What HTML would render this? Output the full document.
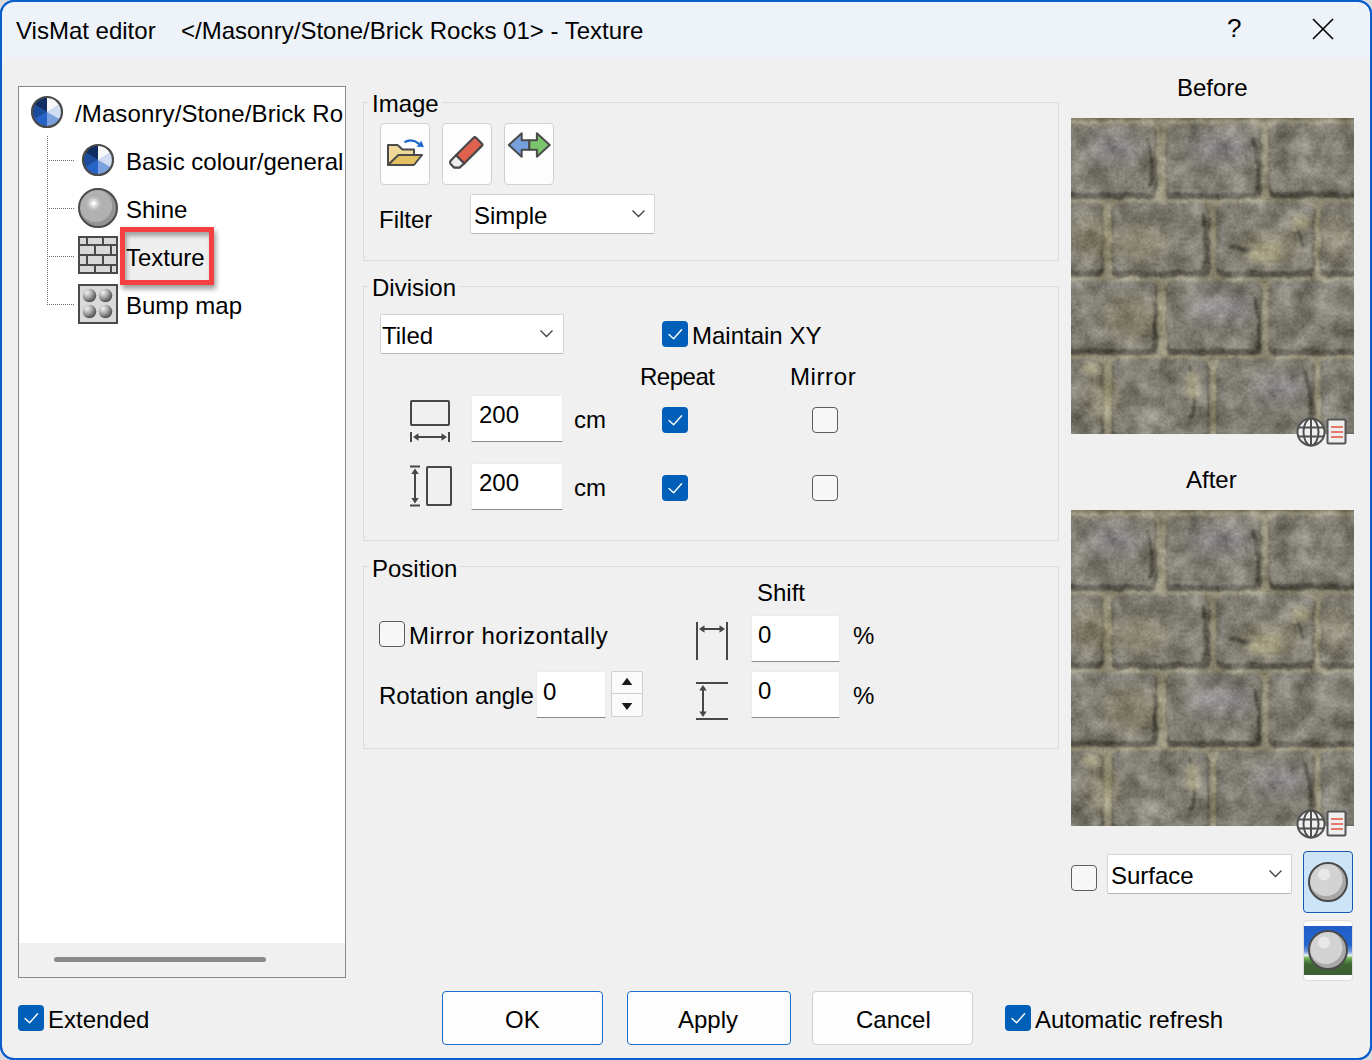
<!DOCTYPE html>
<html><head><meta charset="utf-8">
<style>
html,body{margin:0;padding:0;width:1372px;height:1060px;overflow:hidden;background:#dcdcdc;}
*{box-sizing:border-box;}
#win{position:absolute;left:0;top:0;width:1372px;height:1060px;background:#f0f0f0;border:2px solid #0b5fcd;border-radius:14px;overflow:hidden;}
.t{position:absolute;font-family:"Liberation Sans",sans-serif;font-size:24px;line-height:24px;color:#000;white-space:nowrap;}
.abs{position:absolute;}
#title{position:absolute;left:0;top:0;width:1368px;height:56px;background:#eef3fa;}
.grp{position:absolute;border:1px solid #dcdcdc;}
.lbl{background:#f0f0f0;padding:0 3px 0 3px;}
.combo{position:absolute;background:#fff;border:1px solid #d4d4d4;border-bottom-color:#b8b8b8;border-radius:2px;}
.edit{position:absolute;background:#fff;border:1px solid #ebebeb;border-bottom:1px solid #8a8a8a;border-radius:2px 2px 0 0;}
.cb{position:absolute;width:26px;height:26px;border-radius:4px;}
.cb.on{background:#005fb8;}
.cb.on::after{content:"";position:absolute;left:0;top:0;width:26px;height:26px;background:no-repeat;}
.cb.off{background:#f7f7f7;border:1.6px solid #5c5c5c;}
.btn{position:absolute;background:#fdfdfd;border:1px solid #d0d0d0;border-radius:4px;}
.btn.blue{border:1.5px solid #1a6fcc;}
</style></head>
<body>
<div id="win">
<div id="title"></div>
</div>
<!-- everything positioned in page coordinates -->
<div class="t" style="left:16px;top:19px;">VisMat editor</div>
<div class="t" style="left:181px;top:19px;">&lt;/Masonry/Stone/Brick Rocks 01&gt; - Texture</div>
<div class="t" style="left:1227px;top:16px;font-size:26px;">?</div>
<svg class="abs" style="left:1312px;top:18px" width="22" height="22" viewBox="0 0 22 22"><path d="M1 1L21 21M21 1L1 21" stroke="#000" stroke-width="1.6"/></svg>


<!-- TREE -->
<div class="abs" style="left:18px;top:86px;width:328px;height:892px;background:#fff;border:1px solid #828790;"></div>
<div class="abs" style="left:19px;top:943px;width:326px;height:34px;background:#f0f0f0;"></div>
<div class="abs" style="left:54px;top:957px;width:212px;height:5px;background:#8a8a8a;border-radius:3px;"></div>
<svg class="abs" style="left:19px;top:87px" width="326" height="260">
 <g stroke="#6e6e6e" stroke-width="1" stroke-dasharray="1 1" fill="none">
  <path d="M28.5 49V218"/>
  <path d="M28 73.5H55M28 121.5H55M28 169.5H55M28 217.5H55"/>
 </g>
</svg>
<!-- pie icons -->
<svg class="abs" style="left:30px;top:95px" width="34" height="34" viewBox="-17 -17 34 34">
 <circle r="15" fill="#5a7fc0"/>
 <g>
  <path d="M0 0L0 -15A15 15 0 0 0 -12.99 -7.5Z" fill="#0f2d63"/>
  <path d="M0 0L-12.99 -7.5A15 15 0 0 0 -12.99 7.5Z" fill="#1b4b9b"/>
  <path d="M0 0L-12.99 7.5A15 15 0 0 0 0 15Z" fill="#2563c6"/>
  <path d="M0 0L0 15A15 15 0 0 0 12.99 7.5Z" fill="#7aa1dd"/>
  <path d="M0 0L12.99 7.5A15 15 0 0 0 12.99 -7.5Z" fill="#cfdcf1"/>
  <path d="M0 0L12.99 -7.5A15 15 0 0 0 0 -15Z" fill="#f7f7f7"/>
 </g>
 <circle r="15" fill="none" stroke="#4a4a4a" stroke-width="2.2"/>
</svg>
<svg class="abs" style="left:81px;top:143px" width="34" height="34" viewBox="-17 -17 34 34">
 <circle r="15" fill="#5a7fc0"/>
 <g>
  <path d="M0 0L0 -15A15 15 0 0 0 -12.99 -7.5Z" fill="#0f2d63"/>
  <path d="M0 0L-12.99 -7.5A15 15 0 0 0 -12.99 7.5Z" fill="#1b4b9b"/>
  <path d="M0 0L-12.99 7.5A15 15 0 0 0 0 15Z" fill="#2563c6"/>
  <path d="M0 0L0 15A15 15 0 0 0 12.99 7.5Z" fill="#7aa1dd"/>
  <path d="M0 0L12.99 7.5A15 15 0 0 0 12.99 -7.5Z" fill="#cfdcf1"/>
  <path d="M0 0L12.99 -7.5A15 15 0 0 0 0 -15Z" fill="#f7f7f7"/>
 </g>
 <circle r="15" fill="none" stroke="#4a4a4a" stroke-width="2.2"/>
</svg>
<!-- shine sphere -->
<svg class="abs" style="left:77px;top:187px" width="42" height="42" viewBox="-21 -21 42 42">
 <defs><filter id="sb"><feGaussianBlur stdDeviation="0.6"/></filter></defs>
 <circle r="19" fill="#939393"/>
 <g filter="url(#sb)">
 <circle cx="-2.2" cy="-2.2" r="16.3" fill="#b1b1b1"/>
 <circle cx="-4.3" cy="-4.6" r="7" fill="#bdbdbd"/>
 <circle cx="-4.3" cy="-4.6" r="5" fill="#d2d2d2"/>
 <circle cx="-4.3" cy="-4.6" r="3.2" fill="#e6e6e6"/>
 <circle cx="-4.3" cy="-4.6" r="1.8" fill="#ffffff"/>
 </g>
 <circle r="19" fill="none" stroke="#4a4a4a" stroke-width="2"/>
</svg>
<!-- brick icon -->
<svg class="abs" style="left:77px;top:235px" width="42" height="40" viewBox="0 0 42 40">
 <rect x="2" y="2" width="38" height="36" fill="#d9d9d9" stroke="#4a4a4a" stroke-width="2"/>
 <path d="M2 10H40M2 20H40M2 30H40M10 2V10M26 2V10M18 10V20M34 10V20M10 20V30M26 20V30M18 30V38M34 30V38" stroke="#4a4a4a" stroke-width="2" fill="none"/>
</svg>
<!-- bump icon -->
<svg class="abs" style="left:77px;top:283px" width="42" height="42" viewBox="0 0 42 42">
 <defs>
  <radialGradient id="bg1" cx="0.32" cy="0.28" r="0.8">
   <stop offset="0" stop-color="#f2f2f2"/><stop offset="0.45" stop-color="#a8a8a8"/><stop offset="0.85" stop-color="#5a5a5a"/><stop offset="1" stop-color="#555"/>
  </radialGradient>
 </defs>
 <rect x="2" y="2" width="38" height="38" fill="#d9d9d9" stroke="#4a4a4a" stroke-width="2"/>
 <circle cx="12.5" cy="12.5" r="6.8" fill="url(#bg1)"/>
 <circle cx="28.5" cy="12.5" r="6.8" fill="url(#bg1)"/>
 <circle cx="12.5" cy="28.5" r="6.8" fill="url(#bg1)"/>
 <circle cx="28.5" cy="28.5" r="6.8" fill="url(#bg1)"/>
</svg>
<!-- selected item + annotation -->
<div class="abs" style="left:125px;top:232px;width:84px;height:48px;background:#efefef;box-shadow:inset 2px 4px 4px rgba(0,0,0,0.32);"></div>
<div class="abs" style="left:120px;top:227px;width:94px;height:58px;border:5px solid #f5403f;box-shadow:2px 4px 5px rgba(0,0,0,0.38);"></div>
<div class="abs" style="left:19px;top:87px;width:324px;height:856px;overflow:hidden;">
<div class="t" style="left:56px;top:15px;letter-spacing:0.12px;">/Masonry/Stone/Brick Ro</div>
<div class="t" style="left:107px;top:63px;">Basic colour/general</div>
<div class="t" style="left:107px;top:111px;">Shine</div>
<div class="t" style="left:107px;top:159px;">Texture</div>
<div class="t" style="left:107px;top:207px;">Bump map</div>
</div>


<!-- IMAGE GROUP -->
<div class="grp" style="left:363px;top:102px;width:696px;height:159px;"></div>
<div class="t lbl" style="left:369px;top:92px;">Image</div>
<div class="btn" style="left:380px;top:123px;width:50px;height:62px;"></div>
<div class="btn" style="left:442px;top:123px;width:50px;height:62px;"></div>
<div class="btn" style="left:504px;top:123px;width:50px;height:62px;"></div>
<svg class="abs" style="left:380px;top:123px" width="50" height="62" viewBox="0 0 50 62">
 <path d="M8 42V22H17.5L22.5 26.5H34V32" fill="#f0d898" stroke="#4a4a4a" stroke-width="2" stroke-linejoin="round"/>
 <path d="M8 42L18.4 32H42L34 42Z" fill="#e3c060" stroke="#4a4a4a" stroke-width="2" stroke-linejoin="round"/>
 <path d="M24.5 19.3Q32 15 39 20.8" fill="none" stroke="#1a66cc" stroke-width="2.2"/>
 <path d="M41.2 18.2L43.5 23.8L37.2 23.5Z" fill="#1a66cc" stroke="#1a66cc" stroke-width="0.6" stroke-linejoin="round"/>
</svg>
<svg class="abs" style="left:442px;top:123px" width="50" height="62" viewBox="0 0 50 62">
 <path d="M14 32.3L31.6 14.7Q32.8 13.5 34 14.7L39.8 20.5Q41 21.7 39.8 22.9L22.2 40.5Z" fill="#e06150" stroke="#474747" stroke-width="2.2" stroke-linejoin="round"/>
 <path d="M14 32.3L8.6 37.7Q7.4 39.4 8.6 41L12 44.6H17.6L22.2 40.5Z" fill="#eeeeee" stroke="#474747" stroke-width="2.2" stroke-linejoin="round"/>
</svg>
<svg class="abs" style="left:504px;top:123px" width="50" height="62" viewBox="0 0 50 62">
 <path d="M25.3 17.2H17.7V10.3L4.8 22L17.7 33.7V26.8H25.3Z" fill="#76a0dc" stroke="#4a4a4a" stroke-width="2" stroke-linejoin="round"/>
 <path d="M25.3 17.2H32.9V10.3L45.7 22L32.9 33.7V26.8H25.3Z" fill="#7cc46c" stroke="#4a4a4a" stroke-width="2" stroke-linejoin="round"/>
</svg>
<div class="t" style="left:379px;top:208px;">Filter</div>
<div class="combo" style="left:470px;top:194px;width:185px;height:40px;"></div>
<div class="t" style="left:474px;top:204px;">Simple</div>
<svg class="abs" style="left:631px;top:209px" width="15" height="10"><path d="M1.5 1.5L7.5 7.5L13.5 1.5" fill="none" stroke="#404040" stroke-width="1.3"/></svg>

<!-- DIVISION GROUP -->
<div class="grp" style="left:363px;top:286px;width:696px;height:255px;"></div>
<div class="t lbl" style="left:369px;top:276px;">Division</div>
<div class="combo" style="left:380px;top:314px;width:184px;height:40px;"></div>
<div class="t" style="left:382px;top:324px;">Tiled</div>
<svg class="abs" style="left:539px;top:329px" width="15" height="10"><path d="M1.5 1.5L7.5 7.5L13.5 1.5" fill="none" stroke="#404040" stroke-width="1.3"/></svg>
<div class="cb on" style="left:662px;top:321px;"></div>
<div class="t" style="left:692px;top:324px;">Maintain XY</div>
<div class="t" style="left:640px;top:365px;letter-spacing:-0.5px;">Repeat</div>
<div class="t" style="left:790px;top:365px;letter-spacing:0.6px;">Mirror</div>
<svg class="abs" style="left:408px;top:398px" width="46" height="46" viewBox="0 0 46 46">
 <rect x="3" y="3" width="38" height="24" rx="0.8" fill="none" stroke="#474747" stroke-width="2"/>
 <path d="M3 34V44M41 34V44M8 39H36" stroke="#474747" stroke-width="2" fill="none"/>
 <path d="M5 39L10.5 35.3V42.7Z M39 39L33.5 35.3V42.7Z" fill="#474747"/>
</svg>
<svg class="abs" style="left:408px;top:464px" width="46" height="44" viewBox="0 0 46 44">
 <rect x="19" y="3" width="24" height="38" rx="0.8" fill="none" stroke="#474747" stroke-width="2"/>
 <path d="M2 2.5H12M2 41.5H12M7 8V36" stroke="#474747" stroke-width="2" fill="none"/>
 <path d="M7 4.5L3.3 10H10.7Z M7 39.5L3.3 34H10.7Z" fill="#474747"/>
</svg>
<div class="edit" style="left:471px;top:395px;width:92px;height:47px;"></div>
<div class="t" style="left:479px;top:403px;">200</div>
<div class="t" style="left:574px;top:408px;">cm</div>
<div class="edit" style="left:471px;top:463px;width:92px;height:47px;"></div>
<div class="t" style="left:479px;top:471px;">200</div>
<div class="t" style="left:574px;top:476px;">cm</div>
<div class="cb on" style="left:662px;top:407px;"></div>
<div class="cb off" style="left:812px;top:407px;"></div>
<div class="cb on" style="left:662px;top:475px;"></div>
<div class="cb off" style="left:812px;top:475px;"></div>

<!-- POSITION GROUP -->
<div class="grp" style="left:363px;top:566px;width:696px;height:183px;"></div>
<div class="t lbl" style="left:369px;top:557px;">Position</div>
<div class="t" style="left:757px;top:581px;">Shift</div>
<div class="cb off" style="left:379px;top:621px;"></div>
<div class="t" style="left:409px;top:624px;letter-spacing:0.45px;">Mirror horizontally</div>
<div class="t" style="left:379px;top:684px;">Rotation angle</div>
<div class="edit" style="left:536px;top:671px;width:70px;height:47px;"></div>
<div class="t" style="left:543px;top:680px;">0</div>
<div class="abs" style="left:611px;top:671px;width:32px;height:23px;background:#fafafa;border:1px solid #cfcfcf;border-radius:2px 2px 0 0;"></div>
<div class="abs" style="left:611px;top:693px;width:32px;height:24px;background:#fafafa;border:1px solid #cfcfcf;border-radius:0 0 2px 2px;"></div>
<svg class="abs" style="left:611px;top:671px" width="32" height="46"><path d="M16 6.8L21.3 14H10.7Z M16 39L21.3 32H10.7Z" fill="#1a1a1a"/></svg>
<svg class="abs" style="left:694px;top:620px" width="36" height="42" viewBox="0 0 36 42">
 <path d="M3 2V40M33 2V40M8 9H28" stroke="#474747" stroke-width="2" fill="none"/>
 <path d="M5 9L10.5 5.3V12.7Z M31 9L25.5 5.3V12.7Z" fill="#474747"/>
</svg>
<svg class="abs" style="left:694px;top:681px" width="36" height="40" viewBox="0 0 36 40">
 <path d="M2 2H34M2 38H34M9 7V33" stroke="#474747" stroke-width="2" fill="none"/>
 <path d="M9 4L5.3 9.5H12.7Z M9 36L5.3 30.5H12.7Z" fill="#474747"/>
</svg>
<div class="edit" style="left:751px;top:615px;width:89px;height:47px;"></div>
<div class="t" style="left:758px;top:623px;">0</div>
<div class="t" style="left:853px;top:624px;">%</div>
<div class="edit" style="left:751px;top:671px;width:89px;height:47px;"></div>
<div class="t" style="left:758px;top:679px;">0</div>
<div class="t" style="left:853px;top:684px;">%</div>


<!-- checkmarks -->
<svg width="0" height="0" style="position:absolute">
 <defs>
  <symbol id="chk" viewBox="0 0 26 26"><path d="M7 13.6L11.6 17.8L19.6 8.8" fill="none" stroke="#fff" stroke-width="1.4" stroke-linecap="round" stroke-linejoin="round"/></symbol>
 </defs>
</svg>
<svg class="abs" style="left:662px;top:321px" width="26" height="26"><use href="#chk"/></svg>
<svg class="abs" style="left:662px;top:407px" width="26" height="26"><use href="#chk"/></svg>
<svg class="abs" style="left:662px;top:475px" width="26" height="26"><use href="#chk"/></svg>

<!-- RIGHT COLUMN -->
<div class="t" style="left:1177px;top:76px;">Before</div>
<div class="t" style="left:1186px;top:468px;">After</div>
<svg width="0" height="0" style="position:absolute">
 <defs>
  <filter id="stonef" x="-12" y="-12" width="307" height="340" filterUnits="userSpaceOnUse" color-interpolation-filters="sRGB">
   <feTurbulence type="fractalNoise" baseFrequency="0.07" numOctaves="3" seed="3" result="dn"/>
   <feDisplacementMap in="SourceGraphic" in2="dn" scale="4" xChannelSelector="R" yChannelSelector="G" result="d"/>
   <feGaussianBlur in="d" stdDeviation="1.0" result="b"/>
   <feTurbulence type="fractalNoise" baseFrequency="0.045" numOctaves="4" seed="7" result="n"/>
   <feColorMatrix in="n" type="matrix" values="1 0 0 0 0  1 0 0 0 0  1 0 0 0 0  0 0 0 0 1" result="ng"/>
   <feComposite in="b" in2="ng" operator="arithmetic" k1="0" k2="1" k3="0.4" k4="-0.2" result="c"/>
   <feTurbulence type="fractalNoise" baseFrequency="0.35" numOctaves="2" seed="11" result="n2"/>
   <feColorMatrix in="n2" type="matrix" values="1 0 0 0 0  1 0 0 0 0  1 0 0 0 0  0 0 0 0 1" result="ng2"/>
   <feComposite in="c" in2="ng2" operator="arithmetic" k1="0" k2="1" k3="0.13" k4="-0.065"/>
  </filter>
  <filter id="blobblur" x="-50%" y="-50%" width="200%" height="200%"><feGaussianBlur stdDeviation="7"/></filter>
  <filter id="blobblur2" x="-50%" y="-50%" width="200%" height="200%"><feGaussianBlur stdDeviation="3"/></filter>
  <symbol id="stone" viewBox="0 0 283 316">
   <g filter="url(#stonef)">
   <rect x="-20" y="-20" width="323" height="356" fill="#95917a"/>
   <g fill="#5c5a50">
    <rect x="-4.5" y="8" width="90" height="73" rx="6"/>
    <rect x="95.5" y="8" width="95" height="73" rx="6"/>
    <rect x="197.5" y="8" width="92" height="72" rx="6"/>
    <rect x="-6.5" y="87" width="39" height="72" rx="6"/>
    <rect x="40.5" y="87" width="98" height="72" rx="6"/>
    <rect x="145.5" y="87" width="98" height="72" rx="6"/>
    <rect x="249.5" y="87" width="37" height="72" rx="6"/>
    <rect x="-4.5" y="165" width="91" height="72" rx="6"/>
    <rect x="95.5" y="165" width="95" height="72" rx="6"/>
    <rect x="197.5" y="165" width="92" height="72" rx="6"/>
    <rect x="-6.5" y="243" width="39" height="79" rx="6"/>
    <rect x="40.5" y="243" width="98" height="79" rx="6"/>
    <rect x="145.5" y="243" width="98" height="79" rx="6"/>
    <rect x="249.5" y="243" width="37" height="79" rx="6"/>
   </g>
   <g fill="#807d75">
    <rect x="-4.5" y="6" width="88" height="69" rx="6"/>
    <rect x="96.5" y="6" width="92" height="69" rx="6"/>
    <rect x="198.5" y="6" width="89" height="68" rx="6"/>
    <rect x="-6.5" y="85" width="37" height="68" rx="6"/>
    <rect x="42.5" y="85" width="94" height="68" rx="6"/>
    <rect x="146.5" y="85" width="95" height="68" rx="6"/>
    <rect x="250.5" y="85" width="35" height="68" rx="6"/>
    <rect x="-4.5" y="163" width="89" height="68" rx="6"/>
    <rect x="96.5" y="163" width="92" height="68" rx="6"/>
    <rect x="198.5" y="163" width="89" height="68" rx="6"/>
    <rect x="-6.5" y="241" width="37" height="76" rx="6"/>
    <rect x="42.5" y="241" width="94" height="76" rx="6"/>
    <rect x="146.5" y="241" width="95" height="76" rx="6"/>
    <rect x="250.5" y="241" width="35" height="76" rx="6"/>
   </g>
   <g fill="#938c66" opacity="0.4" filter="url(#blobblur)">
    <ellipse cx="20" cy="120" rx="20" ry="25"/><ellipse cx="70" cy="125" rx="30" ry="20"/><ellipse cx="200" cy="130" rx="35" ry="18"/>
    <ellipse cx="30" cy="280" rx="20" ry="25"/><ellipse cx="60" cy="200" rx="30" ry="25"/><ellipse cx="265" cy="120" rx="15" ry="25"/>
   </g>
   <g fill="#9c96a6" opacity="0.45" filter="url(#blobblur)">
    <ellipse cx="45" cy="30" rx="25" ry="10"/><ellipse cx="150" cy="30" rx="30" ry="10"/><ellipse cx="150" cy="190" rx="30" ry="12"/><ellipse cx="210" cy="270" rx="25" ry="10"/>
   </g>
   <g stroke="#55534a" stroke-width="3.5" fill="none" stroke-linecap="round">
    <path d="M76 22Q84 40 79 68"/><path d="M183 22Q189 45 186 74"/><path d="M132 98Q137 125 133 150"/>
    <path d="M120 250Q126 275 121 300"/><path d="M234 255Q243 278 238 305"/><path d="M83 185Q86 205 82 230"/><path d="M184 180Q190 205 187 230"/>
    <path d="M160 128Q178 134 196 131"/><path d="M220 100Q228 110 232 128"/>
   </g>
   <rect x="-20" y="-20" width="323" height="22" fill="#6e6a55" opacity="0.8"/>
   <g fill="#b8b290" opacity="0.7" filter="url(#blobblur2)">
    <ellipse cx="195" cy="135" rx="18" ry="9"/><ellipse cx="122" cy="268" rx="7" ry="16"/><ellipse cx="230" cy="105" rx="12" ry="8"/><ellipse cx="20" cy="250" rx="10" ry="8"/>
   </g>
   </g>
  </symbol>
 </defs>
</svg>
<svg class="abs" style="left:1071px;top:118px" width="283" height="316"><use href="#stone"/></svg>
<svg class="abs" style="left:1071px;top:510px" width="283" height="316"><use href="#stone"/></svg>
<svg width="0" height="0" style="position:absolute">
 <defs>
  <symbol id="globedoc" viewBox="0 0 56 34">
   <circle cx="15" cy="17" r="13.5" fill="#efefef" stroke="#505050" stroke-width="2"/>
   <ellipse cx="15" cy="17" rx="7.5" ry="13.5" fill="none" stroke="#505050" stroke-width="2"/>
   <path d="M15 3.5V30.5M2 12.6H28M2 21.4H28" stroke="#505050" stroke-width="2" fill="none"/>
   <rect x="31.5" y="4.5" width="18" height="24" rx="1.5" fill="#efefef" stroke="#555" stroke-width="2"/>
   <path d="M35 12H47M35 17H47M35 22H47" stroke="#e57a68" stroke-width="2"/>
  </symbol>
 </defs>
</svg>
<svg class="abs" style="left:1296px;top:415px" width="56" height="34"><use href="#globedoc"/></svg>
<svg class="abs" style="left:1296px;top:807px" width="56" height="34"><use href="#globedoc"/></svg>

<div class="cb off" style="left:1071px;top:865px;"></div>
<div class="combo" style="left:1107px;top:854px;width:185px;height:40px;"></div>
<div class="t" style="left:1111px;top:864px;">Surface</div>
<svg class="abs" style="left:1268px;top:869px" width="15" height="10"><path d="M1.5 1.5L7.5 7.5L13.5 1.5" fill="none" stroke="#404040" stroke-width="1.3"/></svg>
<div class="abs" style="left:1303px;top:851px;width:50px;height:62px;background:#cce4f7;border:1.5px solid #1659b0;border-radius:4px;"></div>
<div class="abs" style="left:1303px;top:920px;width:50px;height:61px;background:#fff;border:1px solid #dcdcdc;border-radius:4px;overflow:hidden;">
 <div style="position:absolute;left:0;top:5px;width:48px;height:49px;background:linear-gradient(#1f5dc8 0%,#2563cc 38%,#6f9ad8 52%,#e8f0f8 60%,#86c266 64%,#5a9047 70%,#3f6533 78%,#3d6132 100%);"></div>
</div>
<svg width="0" height="0" style="position:absolute">
 <defs>
  <symbol id="sph" viewBox="-21 -21 42 42">
   <circle r="19" fill="#a9a9a9"/>
   <circle cx="-2" cy="-2.5" r="16.5" fill="#d3d3d3"/>
   <circle cx="-4" cy="-7.5" r="6" fill="#e8e8e8"/>
   <circle r="19" fill="none" stroke="#4a4a4a" stroke-width="2"/>
  </symbol>
 </defs>
</svg>
<svg class="abs" style="left:1307px;top:861px" width="42" height="42"><use href="#sph"/></svg>
<svg class="abs" style="left:1307px;top:929px" width="42" height="42"><use href="#sph"/></svg>

<!-- BOTTOM -->
<div class="cb on" style="left:18px;top:1005px;"></div>
<svg class="abs" style="left:18px;top:1005px" width="26" height="26"><use href="#chk"/></svg>
<div class="t" style="left:48px;top:1008px;">Extended</div>
<div class="btn blue" style="left:442px;top:991px;width:161px;height:54px;"></div>
<div class="t" style="left:505px;top:1008px;">OK</div>
<div class="btn blue" style="left:627px;top:991px;width:164px;height:54px;"></div>
<div class="t" style="left:678px;top:1008px;">Apply</div>
<div class="btn" style="left:812px;top:991px;width:161px;height:54px;"></div>
<div class="t" style="left:856px;top:1008px;">Cancel</div>
<div class="cb on" style="left:1005px;top:1005px;"></div>
<svg class="abs" style="left:1005px;top:1005px" width="26" height="26"><use href="#chk"/></svg>
<div class="t" style="left:1035px;top:1008px;">Automatic refresh</div>
<!-- window border on top -->
<div class="abs" style="left:0;top:0;width:1372px;height:1060px;border:2px solid #0b5fcd;border-radius:14px;pointer-events:none;"></div>

</body></html>
